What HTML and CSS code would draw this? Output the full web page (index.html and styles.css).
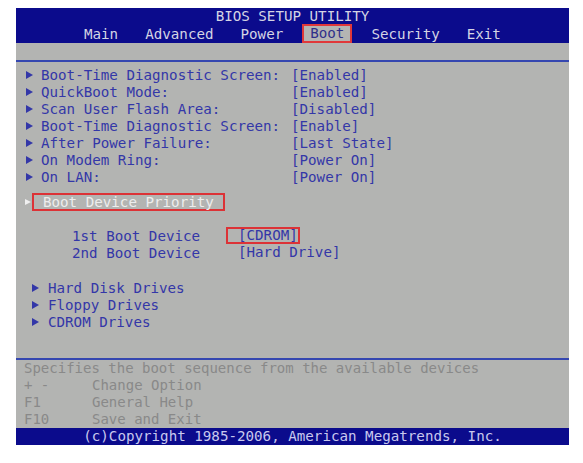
FILE: index.html
```html
<!DOCTYPE html>
<html>
<head>
<meta charset="utf-8">
<link rel="stylesheet" href="styles.css">
</head>
<body>
<div class="screen">
  <div class="header">
    <div class="title">BIOS SETUP UTILITY</div>
    <div class="menu">
      <span class="tab">Main</span>
      <span class="tab">Advanced</span>
      <span class="tab">Power</span>
      <span class="tab active">Boot</span>
      <span class="tab">Security</span>
      <span class="tab">Exit</span>
    </div>
  </div>
  <div class="strip"></div>
  <div class="content">
    <div class="opts">
      <div class="opt"><span class="arrow"></span><span class="label">Boot-Time Diagnostic Screen:</span><span class="val">[Enabled]</span></div>
      <div class="opt"><span class="arrow"></span><span class="label">QuickBoot Mode:</span><span class="val">[Enabled]</span></div>
      <div class="opt"><span class="arrow"></span><span class="label">Scan User Flash Area:</span><span class="val">[Disabled]</span></div>
      <div class="opt"><span class="arrow"></span><span class="label">Boot-Time Diagnostic Screen:</span><span class="val">[Enable]</span></div>
      <div class="opt"><span class="arrow"></span><span class="label">After Power Failure:</span><span class="val">[Last State]</span></div>
      <div class="opt"><span class="arrow"></span><span class="label">On Modem Ring:</span><span class="val">[Power On]</span></div>
      <div class="opt"><span class="arrow"></span><span class="label">On LAN:</span><span class="val">[Power On]</span></div>
    </div>
    <div class="priority"><span class="arrow white"></span><span class="sel">Boot Device Priority</span></div>
    <div class="devices">
      <div class="dev"><span class="dlabel">1st Boot Device</span><span class="dval boxed">[CDROM]</span></div>
      <div class="dev"><span class="dlabel">2nd Boot Device</span><span class="dval">[Hard Drive]</span></div>
    </div>
    <div class="drives">
      <div class="drive"><span class="arrow"></span><span>Hard Disk Drives</span></div>
      <div class="drive"><span class="arrow"></span><span>Floppy Drives</span></div>
      <div class="drive"><span class="arrow"></span><span>CDROM Drives</span></div>
    </div>
  </div>
  <div class="help">
    <div class="hrow">Specifies the boot sequence from the available devices</div>
    <div class="hrow"><span class="key">+ -</span><span>Change Option</span></div>
    <div class="hrow"><span class="key">F1</span><span>General Help</span></div>
    <div class="hrow"><span class="key">F10</span><span>Save and Exit</span></div>
  </div>
  <div class="footer">(c)Copyright 1985-2006, American Megatrends, Inc.</div>
</div>
</body>
</html>
```
FILE: styles.css
```css
html, body {
  margin: 0;
  padding: 0;
  background: #ffffff;
}
body {
  font-family: "DejaVu Sans Mono", "Liberation Mono", monospace;
  font-size: 14.2px;
}
.screen {
  margin: 8px 0 0 16px;
  width: 553px;
  height: 437px;
  background: #b3b4b2;
  display: flex;
  flex-direction: column;
}
.header {
  background: #0b0b8c;
  height: 35px;
  color: #d4d4e4;
}
.title {
  height: 16px;
  line-height: 17px;
  text-align: center;
}
.menu {
  display: flex;
  gap: 11px;
  padding-left: 60px;
  height: 19px;
}
.tab {
  border: 2px solid transparent;
  border-bottom: 0;
  padding: 0 6px;
  box-sizing: border-box;
  height: 19px;
  line-height: 17px;
}
.tab.active {
  background: #b4b5b3;
  border: 2px solid #e0383a;
  color: #30308a;
  line-height: 15px;
}
.strip {
  height: 17px;
  border-bottom: 2px solid #3547b0;
}
.content {
  border-bottom: 2px solid #3547b0;
  color: #3337a8;
  padding-top: 4px;
  box-sizing: border-box;
  height: 298px;
}
.opt {
  display: flex;
  align-items: center;
  height: 17px;
  padding-left: 10px;
}
.arrow {
  display: inline-block;
  width: 0;
  height: 0;
  border-left: 7px solid #3337a8;
  border-top: 4px solid transparent;
  border-bottom: 4px solid transparent;
  margin-right: 8px;
}
.arrow.white {
  border-left-color: #f0f0f0;
  border-left-width: 6px;
  border-top-width: 3.5px;
  border-bottom-width: 3.5px;
  margin-right: 1px;
}
.label {
  width: 250px;
}
.priority {
  display: flex;
  align-items: center;
  margin-top: 8px;
  padding-left: 9px;
}
.sel {
  border: 2px solid #dc3236;
  color: #ededed;
  padding: 0 9px;
  line-height: 14px;
}
.devices {
  margin-top: 16px;
  padding-left: 56px;
}
.dev {
  display: flex;
  align-items: center;
  height: 17px;
}
.dlabel {
  width: 154px;
}
.dval {
  padding-left: 10px;
  line-height: 13px;
  border: 2px solid transparent;
}
.dval.boxed {
  border-color: #dc3236;
  padding-right: 0;
}
.drives {
  margin-top: 18px;
}
.drive {
  display: flex;
  align-items: center;
  height: 17px;
  padding-left: 16px;
}
.drive .arrow {
  margin-right: 9px;
}
.help {
  height: 68px;
  color: #898989;
  padding-left: 8px;
  font-size: 14px;
}
.hrow {
  height: 17px;
  line-height: 17px;
  display: flex;
}
.key {
  width: 68px;
}
.footer {
  background: #0b0b8c;
  color: #c8c8ee;
  height: 17px;
  line-height: 17px;
  text-align: center;
}
```
